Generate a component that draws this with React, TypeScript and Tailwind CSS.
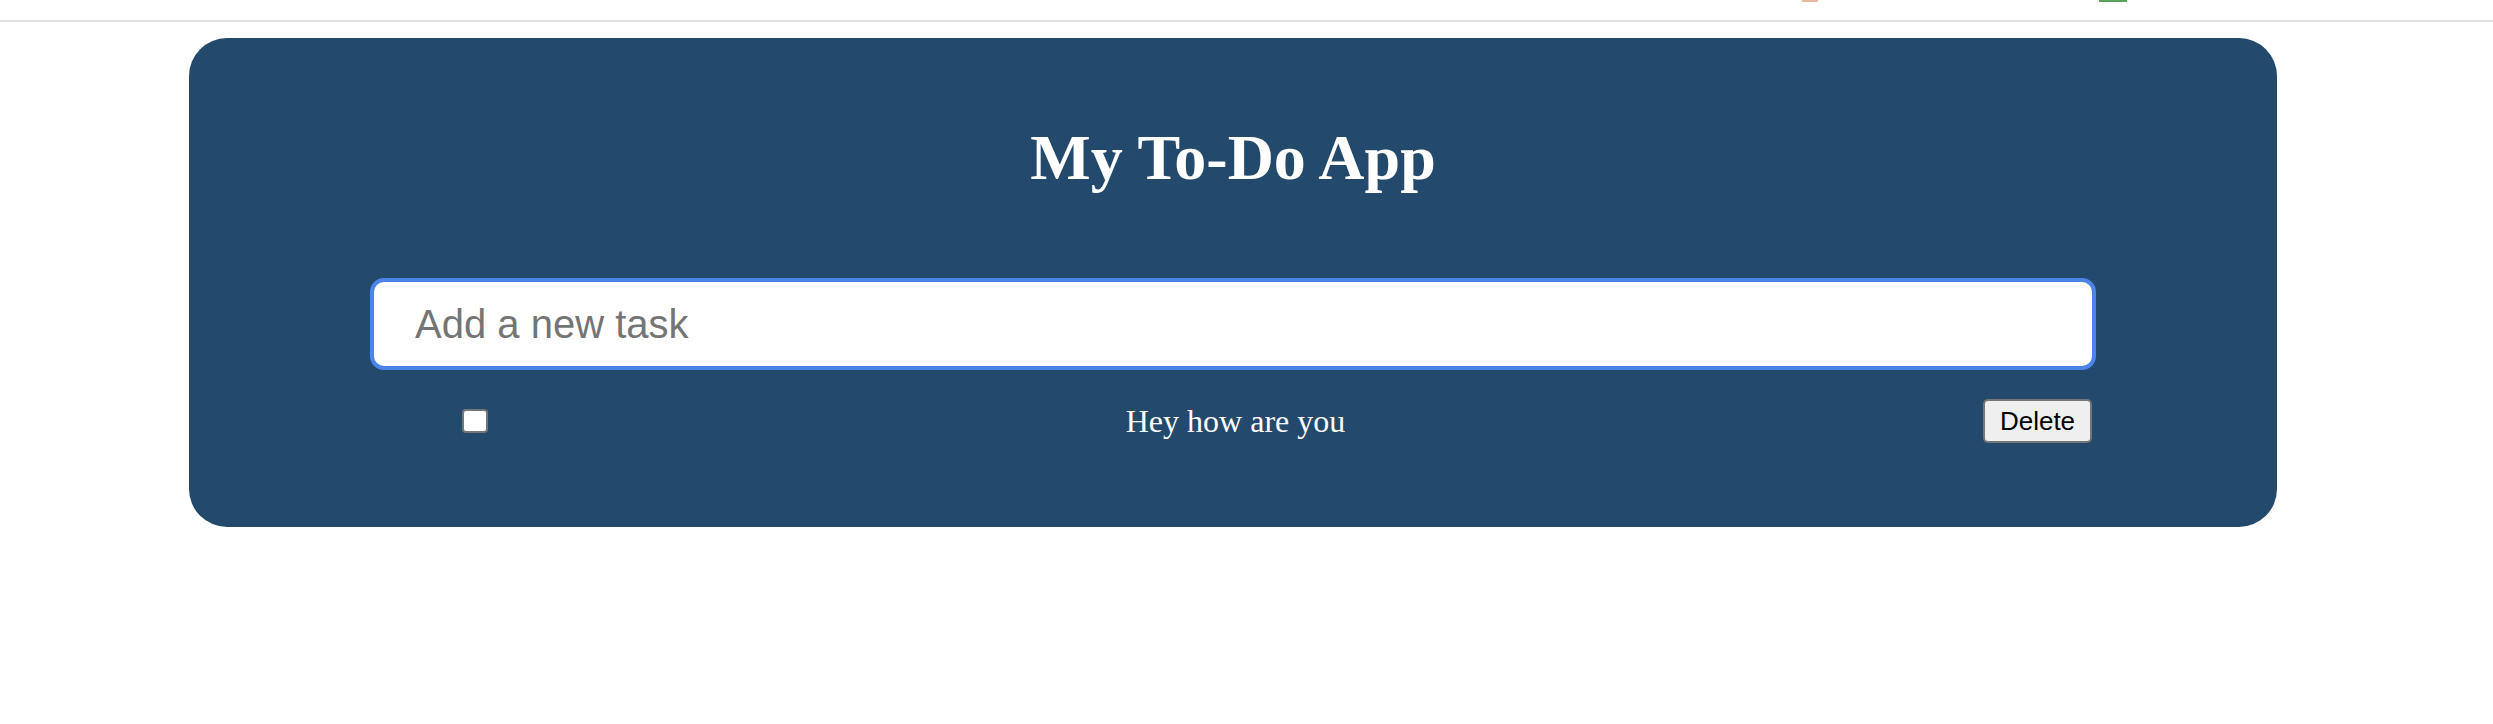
export default function App() {
  return (
    <div className="min-h-screen bg-white">
      {/* browser toolbar edge */}
      <div className="relative h-[22px] border-b-2 border-[#e2e2e2]">
        <div className="absolute left-[1802px] top-0 h-[2px] w-[16px] bg-[#e9b9a3]" />
        <div className="absolute left-[2099px] top-0 h-[2px] w-[28px] bg-[#5aa35e]" />
      </div>

      <div className="ml-[189px] mt-[16px] w-[2088px] rounded-[38px] bg-[#234a6c] pt-[83px] pb-[84px]">
        <h1 className="text-center font-['Liberation_Serif',serif] text-[64px] font-bold leading-[74px] text-white">
          My To-Do App
        </h1>

        <div className="mx-auto mt-[83px] w-[1726px]">
          <input
            type="text"
            placeholder="Add a new task"
            className="block h-[92px] w-full rounded-[14px] border-4 border-[#4d84ea] bg-white pl-[41px] font-['Liberation_Sans',Arial,sans-serif] text-[40px] text-black outline-none placeholder:text-[#757575]"
          />

          <ul className="mt-[29px] flex items-center justify-between pl-[92px] pr-[4px]">
            <input
              type="checkbox"
              className="h-[24px] w-[26px] appearance-none rounded-[4px] border-2 border-[#767676] bg-white"
            />
            <span className="font-['Liberation_Serif',serif] text-[32px] leading-[44px] text-white">
              Hey how are you
            </span>
            <button className="h-[44px] w-[109px] rounded-[5px] border-2 border-[#767676] bg-[#efefef] font-['Liberation_Sans',Arial,sans-serif] text-[26px] leading-none text-black">
              Delete
            </button>
          </ul>
        </div>
      </div>
    </div>
  );
}
